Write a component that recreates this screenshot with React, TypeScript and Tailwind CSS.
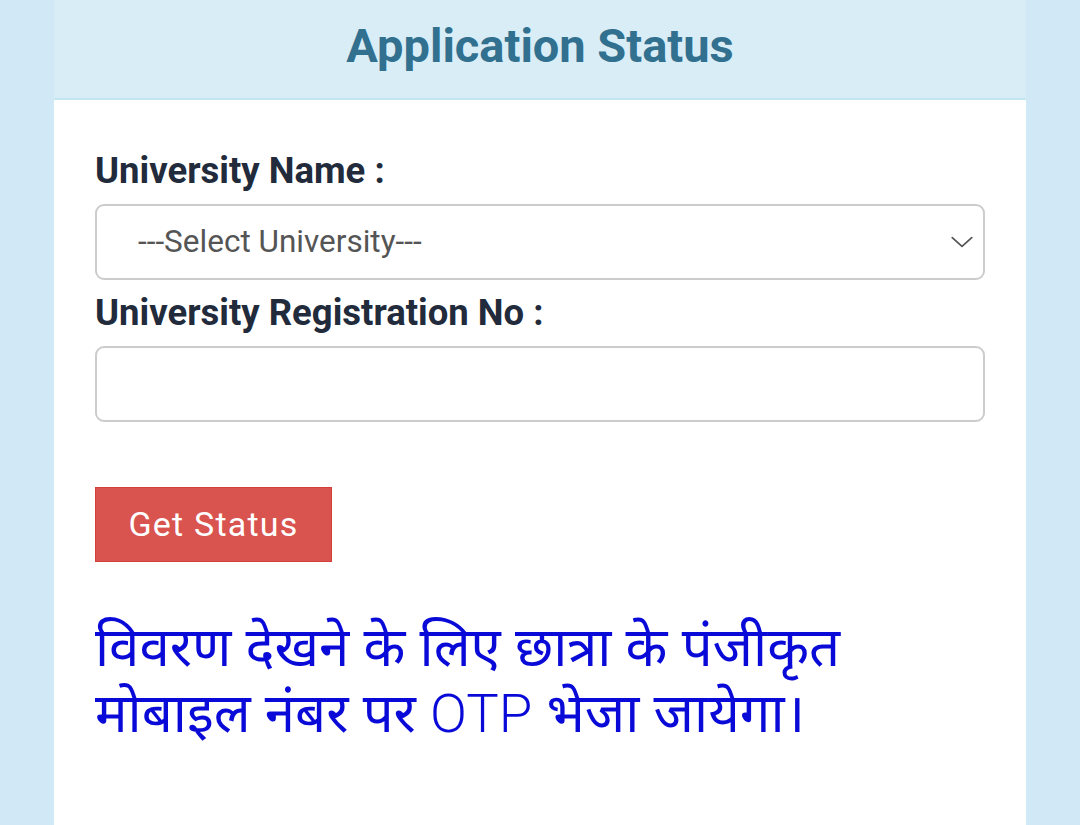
import React from 'react';

const App: React.FC = () => {
    return (
        <div className="w-[1080px] h-[825px] bg-[#d1e9f6] overflow-hidden font-['Roboto',sans-serif]">
            <div className="mx-[54px] h-full bg-white flex flex-col">
                {/* Encabezado */}
                <div className="h-[100px] bg-[#d9edf7] border-b-2 border-[#c4e6f3] flex items-center justify-center shrink-0">
                    <h1 className="text-[47px] font-bold text-[#31708f] leading-none pb-2">Application Status</h1>
                </div>

                {/* Formulario */}
                <div className="px-[41px] pt-[50px] flex flex-col">
                    <label className="text-[36.5px] font-bold text-[#222b3b] leading-[42px]">University Name :</label>
                    <div className="mt-[12px] h-[76px] border-2 border-[#cccccc] rounded-[9px] flex items-center justify-between pl-[41px] pr-[8px]">
                        <span className="text-[31.5px] text-[#555555]">---Select University---</span>
                        <svg width="26" height="26" viewBox="0 0 24 24" fill="none" stroke="#555555" strokeWidth="1.6" strokeLinecap="round" strokeLinejoin="round">
                            <path d="M3 8l9 8 9-8" />
                        </svg>
                    </div>

                    <label className="mt-[12px] text-[36.5px] font-bold text-[#222b3b] leading-[42px]">University Registration No :</label>
                    <div className="mt-[12px] h-[76px] border-2 border-[#cccccc] rounded-[9px]" />

                    <div className="mt-[65px]">
                        <button className="w-[237px] h-[75px] bg-[#d9534f] border border-[#d43f3a] text-white text-[34px] tracking-[1.2px]">
                            Get Status
                        </button>
                    </div>

                    <p className="mt-[50px] text-[54.5px] leading-[66px] text-[#0a0ad8] font-['Noto_Sans','Noto_Sans_Devanagari',sans-serif]">
                        विवरण देखने के लिए छात्रा के पंजीकृत मोबाइल नंबर पर <span className="font-['Roboto',sans-serif] font-light leading-none">OTP</span> भेजा जायेगा।
                    </p>
                </div>
            </div>
        </div>
    );
};

export default App;
